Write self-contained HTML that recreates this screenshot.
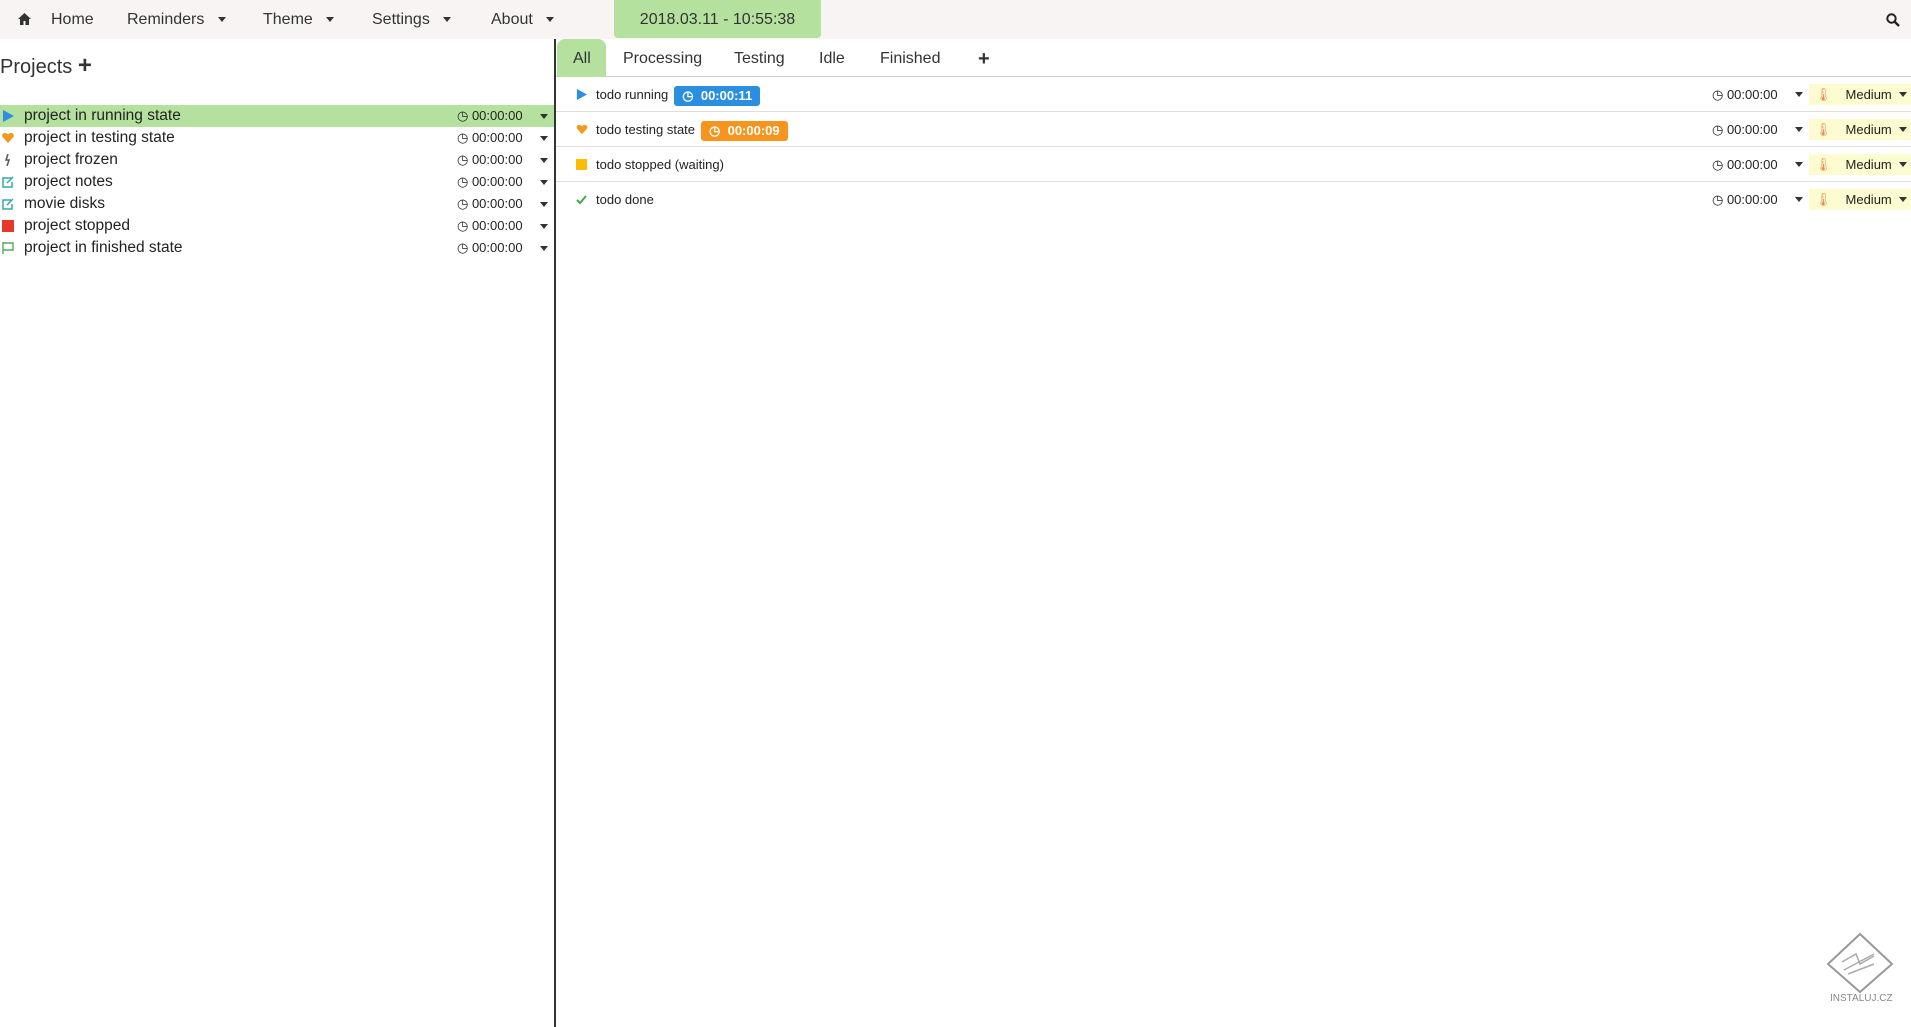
<!DOCTYPE html>
<html><head><meta charset="utf-8"><style>
*{box-sizing:border-box;margin:0;padding:0}
body{width:1911px;height:1027px;background:#fff;font-family:"Liberation Sans",sans-serif;color:#222;position:relative;overflow:hidden}
.nav{position:absolute;left:0;top:0;width:1911px;height:39px;background:#f8f4f4}
.a{position:absolute;top:0;height:39px;line-height:40px;font-size:16px;color:#333}
.car{display:inline-block;width:0;height:0;border-left:4px solid transparent;border-right:4px solid transparent;border-top:5px solid #333;vertical-align:middle}
.date{position:absolute;left:614px;top:0;width:207px;height:38px;background:#b5e19f;border-radius:0 0 4px 4px;text-align:center;line-height:40px;font-size:16px;color:#333}
.div{position:absolute;left:554px;top:39px;width:2px;height:988px;background:#333}
.ph{position:absolute;left:0;top:52px;font-size:20px;color:#333}
.pr{position:absolute;left:0;width:554px;height:22px;font-size:15.5px;line-height:22px}
.pr .t{position:absolute;left:24px}
.pr .tm{position:absolute;left:457px;font-size:13px}
.pr .c{position:absolute;left:540px;top:9px}
.ic{position:absolute;left:2px;top:5px;width:12px;height:12px}
.tabs{position:absolute;left:556px;top:39px;height:38px;width:1355px;border-bottom:1px solid #ccc}
.tab{position:absolute;top:0;height:38px;line-height:40px;font-size:16px;color:#333}
.tr{position:absolute;left:556px;width:1355px;height:35px;border-bottom:1px solid #ddd;font-size:13px;line-height:35px}
.tr .t{position:absolute;left:40px}
.badge{display:inline-block;color:#fff;font-weight:bold;border-radius:3px;height:20px;line-height:20px;padding:0 8px;font-size:13px;margin-left:6px;vertical-align:middle}
.tr .tm{position:absolute;left:1156px}
.tr .c{position:absolute;left:1239px;top:15px}
.med{position:absolute;left:1253px;top:7px;width:102px;height:21px;background:#fdfbd0;line-height:21px}
</style></head><body>
<div class="nav">
<svg style="position:absolute;left:18px;top:13px" width="13" height="12" viewBox="0 0 13 12"><path d="M6.5 0L0 6h2v6h3.5V8h2v4H11V6h2z" fill="#333"/></svg>
<div class="a" style="left:51px">Home</div>
<div class="a" style="left:127px">Reminders &nbsp;&nbsp;<span class="car"></span></div>
<div class="a" style="left:263px">Theme &nbsp;&nbsp;<span class="car"></span></div>
<div class="a" style="left:372px">Settings &nbsp;&nbsp;<span class="car"></span></div>
<div class="a" style="left:491px">About &nbsp;&nbsp;<span class="car"></span></div>
<div class="date">2018.03.11 - 10:55:38</div>
<svg style="position:absolute;left:1886px;top:13px" width="14" height="14" viewBox="0 0 14 14"><circle cx="5.5" cy="5.5" r="4.2" stroke="#222" stroke-width="2" fill="none"/><path d="M8.5 8.5L13 13" stroke="#222" stroke-width="2.4"/></svg>
</div>
<div class="ph">Projects <b style="font-size:24px">+</b></div>
<div class="div"></div>

<div class="pr" style="top:105px;background:#b5e19f"><svg class="ic" viewBox="0 0 12 12"><path d="M1 0L12 6L1 12z" fill="#2a8fe0"/></svg><span class="t">project in running state</span><span class="tm">◷ 00:00:00</span><span class="c car"></span></div>
<div class="pr" style="top:127px"><svg class="ic" viewBox="0 0 12 12"><path d="M6 11L0.5 5C-1 2 3-1 6 2.5 9-1 13 2 11.5 5z" fill="#f39a1c"/></svg><span class="t">project in testing state</span><span class="tm">◷ 00:00:00</span><span class="c car"></span></div>
<div class="pr" style="top:149px"><svg class="ic" viewBox="0 0 12 12"><path d="M6 0L4 6h3l-2 6" stroke="#555" stroke-width="1.5" fill="none"/></svg><span class="t">project frozen</span><span class="tm">◷ 00:00:00</span><span class="c car"></span></div>
<div class="pr" style="top:171px"><svg class="ic" viewBox="0 0 12 12"><path d="M9 2H1v9h9V6M5 7l6-6" stroke="#3aa" stroke-width="1.5" fill="none"/></svg><span class="t">project notes</span><span class="tm">◷ 00:00:00</span><span class="c car"></span></div>
<div class="pr" style="top:193px"><svg class="ic" viewBox="0 0 12 12"><path d="M9 2H1v9h9V6M5 7l6-6" stroke="#3aa" stroke-width="1.5" fill="none"/></svg><span class="t">movie disks</span><span class="tm">◷ 00:00:00</span><span class="c car"></span></div>
<div class="pr" style="top:215px"><svg class="ic" viewBox="0 0 12 12"><rect width="12" height="12" fill="#e8382c"/></svg><span class="t">project stopped</span><span class="tm">◷ 00:00:00</span><span class="c car"></span></div>
<div class="pr" style="top:237px"><svg class="ic" viewBox="0 0 12 12"><path d="M1 0v12M1 1h10v7H1" stroke="#5a5" stroke-width="1.4" fill="none"/></svg><span class="t">project in finished state</span><span class="tm">◷ 00:00:00</span><span class="c car"></span></div>

<div class="tabs">
<div style="position:absolute;left:1px;top:0;width:49px;height:38px;background:#b5e19f;border-radius:8px 8px 0 0"></div>
<div class="tab" style="left:17px">All</div>
<div class="tab" style="left:67px">Processing</div>
<div class="tab" style="left:178px">Testing</div>
<div class="tab" style="left:263px">Idle</div>
<div class="tab" style="left:324px">Finished</div>
<div class="tab" style="left:422px;font-weight:bold;font-size:20px">+</div>
</div>

<div class="tr" style="top:77px"><svg style="position:absolute;left:20px;top:12px" width="11" height="11" viewBox="0 0 12 12"><path d="M1 0L12 6L1 12z" fill="#2a8fe0"/></svg><span class="t">todo running<span class="badge" style="background:#2a8fe0">◷&nbsp; 00:00:11</span></span><span class="tm">◷ 00:00:00</span><span class="c car"></span><div class="med"><span style="color:#e85;margin-left:6px">🌡</span><span style="margin-left:14px">Medium</span><span class="car" style="position:absolute;right:4px;top:8px"></span></div></div>
<div class="tr" style="top:112px"><svg style="position:absolute;left:20px;top:12px" width="12" height="11" viewBox="0 0 12 12"><path d="M6 11L0.5 5C-1 2 3-1 6 2.5 9-1 13 2 11.5 5z" fill="#f39a1c"/></svg><span class="t">todo testing state<span class="badge" style="background:#f7941d">◷&nbsp; 00:00:09</span></span><span class="tm">◷ 00:00:00</span><span class="c car"></span><div class="med"><span style="color:#e85;margin-left:6px">🌡</span><span style="margin-left:14px">Medium</span><span class="car" style="position:absolute;right:4px;top:8px"></span></div></div>
<div class="tr" style="top:147px"><svg style="position:absolute;left:20px;top:12px" width="11" height="11"><rect width="11" height="11" fill="#fbbc05"/></svg><span class="t">todo stopped (waiting)</span><span class="tm">◷ 00:00:00</span><span class="c car"></span><div class="med"><span style="color:#e85;margin-left:6px">🌡</span><span style="margin-left:14px">Medium</span><span class="car" style="position:absolute;right:4px;top:8px"></span></div></div>
<div class="tr" style="top:182px;border-bottom:none"><svg style="position:absolute;left:20px;top:12px" width="11" height="11" viewBox="0 0 11 11"><path d="M1 6l3 3 6-7" stroke="#4a4" stroke-width="2" fill="none"/></svg><span class="t">todo done</span><span class="tm">◷ 00:00:00</span><span class="c car"></span><div class="med"><span style="color:#e85;margin-left:6px">🌡</span><span style="margin-left:14px">Medium</span><span class="car" style="position:absolute;right:4px;top:8px"></span></div></div>

<svg style="position:absolute;left:1826px;top:932px" width="68" height="62" viewBox="0 0 68 62"><path d="M34 2L66 32L34 60L2 32z" fill="none" stroke="#999" stroke-width="2"/><path d="M16 30l14-8 4 10 14-8M18 38l30-16M22 42l26-10" stroke="#aaa" stroke-width="1.5" fill="none"/></svg>
<div style="position:absolute;left:1830px;top:993px;font-size:10px;color:#888">INSTALUJ.CZ</div>
</body></html>
